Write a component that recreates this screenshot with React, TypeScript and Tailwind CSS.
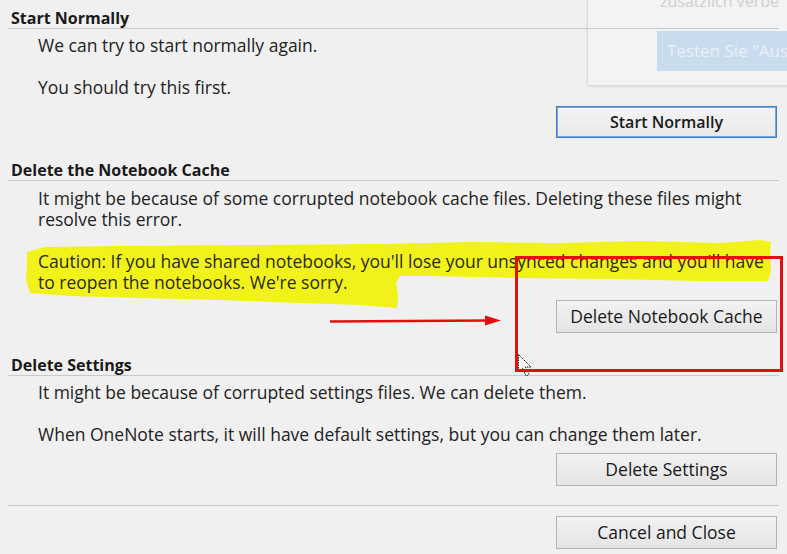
import React from "react";

const font = "font-['Segoe_UI','Open_Sans',sans-serif]";

function Heading({ children }: { children: React.ReactNode }) {
  return (
    <>
      <div className="h-[20px] pl-[11px] text-[16px] font-bold leading-[20px] text-[#1a1a1a]">
        {children}
      </div>
      <div className="ml-[8px] mr-[8px] h-px bg-[#c9c9c9]" />
    </>
  );
}

function Btn({
  children,
  primary,
  className = "",
}: {
  children: React.ReactNode;
  primary?: boolean;
  className?: string;
}) {
  return (
    <div className={`flex justify-end pr-[10px] ${className}`}>
      <button
        className={
          primary
            ? "h-[32px] w-[221px] border-2 border-[#76a8dc] bg-gradient-to-b from-[#f4f4f4] to-[#e9e9e9] text-[16px] font-semibold text-[#1a1a1a] outline outline-1 -outline-offset-1 outline-[#3d7fc1]"
            : "h-[33px] w-[221px] border border-[#b4b4b4] bg-gradient-to-b from-[#f2f2f2] to-[#e4e4e4] text-[17.5px] text-[#1a1a1a]"
        }
      >
        {children}
      </button>
    </div>
  );
}

export default function App() {
  return (
    <div
      className={`relative h-[554px] w-[787px] overflow-hidden bg-[#f0f0f0] ${font} text-[17.5px] text-[#222]`}
    >
      {/* faded popup behind */}
      <div className="absolute left-[587px] top-[-20px] h-[106px] w-[230px] border border-[#dadada] bg-[#f3f3f3] shadow-[0_1px_3px_rgba(0,0,0,0.08)]">
        <div className="absolute left-[72px] top-[8px] whitespace-nowrap text-[16px] text-[#cfcfcf]">
          zusätzlich verbe
        </div>
        <div className="absolute left-[69px] top-[50px] flex h-[40px] w-[200px] items-center bg-[#c9dced] pl-[10px] whitespace-nowrap text-[17px] text-[#e9f1f8]">
          Testen Sie "Aus
        </div>
      </div>

      {/* yellow marker */}
      <svg className="absolute left-0 top-0" width="787" height="554">
        <path
          d="M27 252 L45 247 L120 246 L250 245 L380 244 L470 242 L560 243 L640 241 L720 243 L760 240 L771 242 L770 258 L771 272 L768 281 L700 281 L610 279 L520 278 L430 276 L400 276 L396 283 L398 296 L397 308 L360 305 L300 303 L220 300 L140 298 L70 296 L30 293 L26 280 L27 265 Z"
          fill="#f2f21b"
        />
      </svg>

      <div className="relative pt-[8px]">
        <Heading>Start Normally</Heading>
        <div className="mt-[6px] h-[20px] pl-[38px] leading-[20px]">
          We can try to start normally again.
        </div>
        <div className="mt-[22px] h-[20px] pl-[38px] leading-[20px]">
          You should try this first.
        </div>
        <Btn primary className="mt-[9px]">
          Start Normally
        </Btn>

        <div className="mt-[22px]">
          <Heading>Delete the Notebook Cache</Heading>
        </div>
        <div className="mt-[7px] pl-[38px] leading-[21px]">
          <div className="whitespace-nowrap">
            It might be because of some corrupted notebook cache files. Deleting these files might
          </div>
          <div>resolve this error.</div>
        </div>
        <div className="mt-[21px] pl-[38px] leading-[21px] text-[#2a2a10]">
          <div className="whitespace-nowrap">
            Caution: If you have shared notebooks, you'll lose your unsynced changes and you'll have
          </div>
          <div>to reopen the notebooks. We're sorry.</div>
        </div>
        <Btn className="mt-[7px]">Delete Notebook Cache</Btn>

        <div className="mt-[22px]">
          <Heading>Delete Settings</Heading>
        </div>
        <div className="mt-[6px] h-[20px] pl-[38px] leading-[20px]">
          It might be because of corrupted settings files. We can delete them.
        </div>
        <div className="mt-[22px] h-[20px] pl-[38px] leading-[20px]">
          When OneNote starts, it will have default settings, but you can change them later.
        </div>
        <Btn className="mt-[9px]">Delete Settings</Btn>
        <div className="ml-[8px] mr-[8px] mt-[19px] h-px bg-[#c9c9c9]" />
        <Btn className="mt-[10px]">Cancel and Close</Btn>
      </div>

      {/* annotations */}
      <svg className="absolute left-0 top-0" width="787" height="554">
        <path d="M330 321.5 L490 320.5" stroke="#e30f0f" strokeWidth="2.5" />
        <path d="M485 315.5 L501 320.5 L485 325.5 Z" fill="#e30f0f" />
        <path
          d="M518.5 354.5 L518.5 372 L522.5 368 L526 376 L529 374.5 L525.5 367 L531 367 Z"
          fill="#fff"
          stroke="#111"
          strokeWidth="1"
          strokeDasharray="1.5 1"
        />
      </svg>
      <div className="absolute left-[515px] top-[256px] h-[116px] w-[268px] border-[3px] border-[#e01010]" />
    </div>
  );
}
